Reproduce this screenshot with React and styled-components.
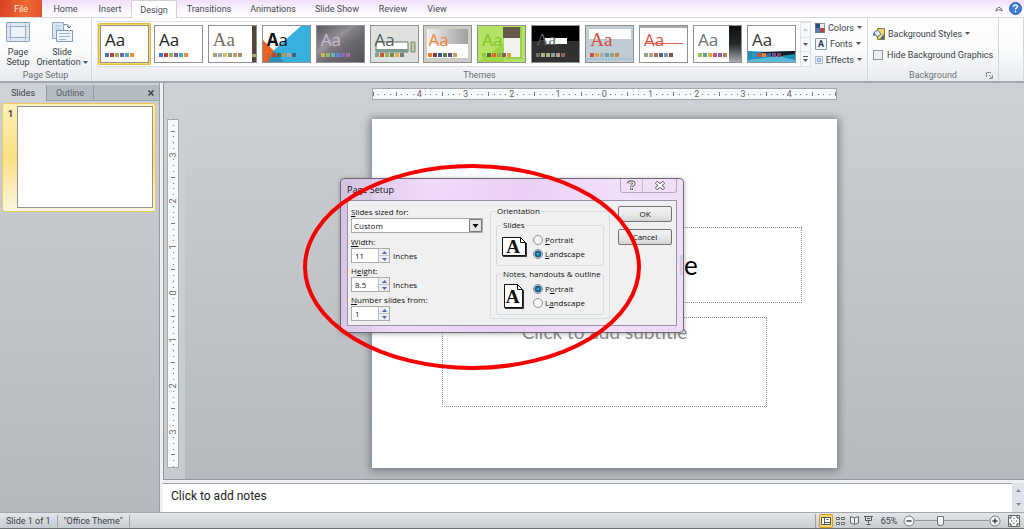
import { useState } from "react";
import styled, { createGlobalStyle } from "styled-components";

const GlobalStyle = createGlobalStyle`
  * {
    box-sizing: border-box;
  }
  body {
    margin: 0;
    font-family: Roboto, "Open Sans", sans-serif;
    font-size: 9px;
    line-height: 12px;
    color: #3b3f45;
  }
  button, input, select, textarea {
    font: inherit;
    color: inherit;
    margin: 0;
  }
  button {
    padding: 0;
    border: 0;
    background: none;
  }
`;

const Window = styled.div`
  position: relative;
  display: flex;
  flex-direction: column;
  height: 100vh;
  overflow: hidden;
  background: #c5c9ce;
`;

/* ---------- ribbon ---------- */

const TabBar = styled.nav`
  display: flex;
  align-items: stretch;
  height: 18px;
  flex: none;
  background: linear-gradient(#f1dffa, #fbf6fe 60%, #ffffff);
  border-bottom: 1px solid #d5d9de;
`;

const FileTab = styled.button`
  width: 42px;
  color: #ffe9dd;
  background: linear-gradient(100deg, #d7401f, #ee6a35 60%, #e2502a);
`;

const Tab = styled.button`
  width: ${(props) => props.$width}px;
  color: #474b52;
  ${(props) =>
    props.$active &&
    `
    margin-bottom: -1px;
    background: #fff;
    border: 1px solid #cdd1d6;
    border-bottom: 0;
    border-radius: 2px 2px 0 0;
  `}
`;

const TabTools = styled.div`
  display: flex;
  align-items: center;
  gap: 6px;
  margin-left: auto;
  padding-right: 2px;
`;

const IconButton = styled.button`
  display: flex;
  align-items: center;
  justify-content: center;
`;

const Ribbon = styled.div`
  display: flex;
  height: 65px;
  flex: none;
  background: linear-gradient(#ffffff, #fafbfc 50%, #e7eaee);
  border-bottom: 2px solid #a3a9b0;
`;

const Group = styled.section`
  display: flex;
  flex-direction: column;
  flex: ${(props) => (props.$grow ? "1" : "none")};
  width: ${(props) => (props.$width ? `${props.$width}px` : "auto")};
  min-width: 0;
  padding: 3px 5px 0;
  border-right: 1px solid #d3d7dc;
`;

const GroupLabel = styled.div`
  display: flex;
  align-items: center;
  justify-content: center;
  margin-top: auto;
  height: 12px;
  color: #6d7279;
`;

const Launcher = styled(IconButton)`
  position: absolute;
  right: 0;
`;

const LauncherLabel = styled(GroupLabel)`
  position: relative;
`;

const BigButtons = styled.div`
  display: flex;
  margin: 0 -5px;
`;

const BigButton = styled.button`
  display: flex;
  flex-direction: column;
  align-items: center;
  width: ${(props) => props.$width}px;
  line-height: 10px;
  gap: 4px;
  white-space: nowrap;
`;

const Arrow = styled.svg`
  display: block;
  flex: none;
  margin: auto;
`;

const WithArrow = styled.span`
  display: flex;
  align-items: center;
  gap: 2px;
`;

const ThemeRow = styled.div`
  display: flex;
  gap: 4px;
`;

const Gallery = styled.div`
  display: flex;
  flex: 1;
  height: 46px;
  min-width: 0;
  background: #fff;
  border: 1px solid #dde1e5;
`;

const ThemeList = styled.div`
  display: flex;
  flex: 1;
  align-items: center;
  justify-content: space-between;
  padding-right: 2px;
  min-width: 0;
  overflow: hidden;
`;

const ThemeFrame = styled.button`
  padding: 2px;
  border-radius: 2px;
  background: ${(props) => (props.$selected ? "#fbd75e" : "transparent")};
  box-shadow: ${(props) => (props.$selected ? "inset 0 0 0 1px #e6b93c" : "none")};
`;

const ThemeCard = styled.span`
  position: relative;
  display: flex;
  flex-direction: column;
  width: 49px;
  height: 38px;
  padding: 4px 4px 0;
  border: 1px solid #8d9196;
  background: #fff;
  overflow: hidden;
`;

const ThemeArt = styled.svg`
  position: absolute;
  inset: 0;
`;

const ThemeLetters = styled.span`
  position: relative;
  font-family: ${(props) => props.$font};
  font-size: ${(props) => props.$size || 17}px;
  line-height: 19px;
  text-align: left;
  color: ${(props) => props.$color};
`;

const Swatches = styled.span`
  position: relative;
  display: flex;
  gap: 1px;
  margin-top: 4px;
`;

const Swatch = styled.span`
  width: 4px;
  height: 4px;
  background: ${(props) => props.$color};
`;

const GalleryArrows = styled.div`
  display: flex;
  flex-direction: column;
  width: 10px;
  border-left: 1px solid #dde1e5;

  button {
    flex: 1;
    background: #f7f8fa;
    border-top: 1px solid #e2e5e9;
  }
`;

const OptionColumn = styled.div`
  display: flex;
  flex-direction: column;
  width: 47px;
  gap: 3px;
`;

const OptionButton = styled.button`
  display: flex;
  align-items: center;
  gap: 3px;
  height: 13px;
  white-space: nowrap;

  ${Arrow} {
    margin: 0;
  }
`;

const BackgroundOptions = styled.div`
  display: flex;
  flex-direction: column;
  gap: 9px;
  padding-top: 6px;
`;

const CheckLabel = styled.label`
  display: flex;
  align-items: center;
  gap: 4px;
  white-space: nowrap;
`;

const Checkbox = styled.input`
  appearance: none;
  width: 10px;
  height: 10px;
  flex: none;
  border: 1px solid #8f949a;
  background: #eceef0;
`;

/* ---------- work area ---------- */

const Workspace = styled.div`
  display: flex;
  flex: 1;
  min-height: 0;
`;

const SlidePane = styled.aside`
  display: flex;
  flex-direction: column;
  width: 160px;
  flex: none;
  padding-top: 2px;
  background: linear-gradient(#cdd1d6, #b5b9bd);
  border-right: 1px solid #979da4;
`;

const PaneTabs = styled.div`
  display: flex;
  height: 16px;
  background: #b5bbc3;
  border-bottom: 1px solid #9da3ab;
`;

const PaneTab = styled.button`
  width: 47px;
  color: ${(props) => (props.$active ? "#3b3f45" : "#5c6168")};
  background: ${(props) => (props.$active ? "#cfd3d8" : "transparent")};
  margin-bottom: ${(props) => (props.$active ? "-1px" : "0")};
  border-right: 1px solid #9199a2;
`;

const PaneClose = styled(IconButton)`
  margin-left: auto;
  width: 16px;
`;

const SlideItem = styled.button`
  display: flex;
  gap: 4px;
  margin: 2px 3px 0 2px;
  padding: 2px 2px 3px 5px;
  border: 1px solid #ecc95a;
  border-radius: 3px;
  background: linear-gradient(#fdf0b8, #fcdf82 50%, #fbf6e2);
  font-weight: bold;

  span {
    padding-top: 2px;
  }
`;

const SlideThumb = styled.div`
  flex: 1;
  aspect-ratio: 4 / 3;
  background: #fff;
  border: 1px solid #8f949b;
`;

const Editor = styled.main`
  display: flex;
  flex-direction: column;
  flex: 1;
  min-width: 0;
  border-left: 3px solid #eef0f3;
`;

const Stage = styled.div`
  display: grid;
  grid-template-columns: 21px 1fr;
  grid-template-rows: 12px 1fr;
  row-gap: 19px;
  flex: 1;
  min-height: 0;
  padding-top: 5px;
  background:
    linear-gradient(#cdd1d5, #c6cbd0) left / 21px 100% no-repeat,
    linear-gradient(#cdd1d5, #b6babe);
  border-left: 1px solid #8f959c;
  border-bottom: 1px solid #8f959c;
`;

const Ruler = styled.div`
  display: flex;
  flex-direction: ${(props) => (props.$vertical ? "column" : "row")};
  justify-content: space-between;
  align-items: center;
  background: #f8f9fa;
  border: 1px solid #a4a9af;
  color: #666;
`;

const TopRuler = styled(Ruler)`
  grid-column: 2;
  justify-self: center;
  width: 465px;
  max-width: 96%;
`;

const SideRuler = styled(Ruler)`
  width: 12px;
  height: 349px;
  margin-left: 3px;
`;

const Tick = styled.span`
  display: flex;
  align-items: center;
  justify-content: center;
  width: 0;
  height: 0;
  transform: ${(props) => (props.$vertical ? "rotate(-90deg)" : "none")};

  i {
    flex: none;
    width: 1px;
    height: ${(props) => (props.$long ? 4 : 1)}px;
    background: #777;
  }
`;

const Slide = styled.article`
  position: relative;
  grid-column: 2;
  justify-self: center;
  align-self: start;
  display: flex;
  flex-direction: column;
  align-items: center;
  width: 465px;
  max-width: 96%;
  aspect-ratio: 4 / 3;
  padding-top: 108px;
  gap: 14px;
  background: #fff;
  box-shadow: 0 1px 8px 2px #7c8187;
  font-family: Lato, sans-serif;
`;

const Placeholder = styled.div`
  display: flex;
  justify-content: center;
  width: ${(props) => props.$width};
  height: ${(props) => props.$height}px;
  border: 1px dotted #8a8a8a;
`;

const SlideTitle = styled(Placeholder)`
  align-items: center;
  font-size: 26px;
  line-height: 32px;
  color: #000;
`;

const SlideSubtitle = styled(Placeholder)`
  padding-top: 2px;
  font-size: 19px;
  line-height: 24px;
  color: #8b8b8b;
`;

const Notes = styled.div`
  display: flex;
  height: 32px;
  flex: none;
  border-top: 3px solid #eef0f3;
  background: #fff;
  box-shadow: inset 0 1px #9ba1a8;
`;

const NotesText = styled.textarea`
  flex: 1;
  resize: none;
  border: 0;
  outline: 0;
  padding: 6px 8px 0;
  background: none;
  font-size: 12px;
  line-height: 14px;
  color: #222;
  overflow: hidden;
`;

const NotesScroll = styled.div`
  display: flex;
  flex-direction: column;
  width: 12px;
  background: #dfe3e7;

  button {
    flex: 1;
  }
`;

/* ---------- status bar ---------- */

const StatusBar = styled.footer`
  display: flex;
  align-items: center;
  height: 17px;
  flex: none;
  background: linear-gradient(#e3e6e9, #c6cbd0);
  border-top: 1px solid #a0a6ac;
  border-bottom: 1px solid #6d7277;
`;

const StatusItem = styled.span`
  padding: 0 6px;
  border-right: 1px solid #9da2a8;
`;

const StatusTools = styled.div`
  display: flex;
  align-items: center;
  margin-left: auto;
  padding: 0 3px;
  border-left: 1px solid #9da2a8;
`;

const ViewButton = styled(IconButton)`
  width: 14px;
  height: 14px;
  border-radius: 2px;
  border: 1px solid ${(props) => (props.$active ? "#d49b25" : "transparent")};
  background: ${(props) => (props.$active ? "#fcd975" : "transparent")};
`;

const FitButton = styled(ViewButton)`
  margin-left: 6px;
`;

const ZoomValue = styled.button`
  width: 28px;
`;

const ZoomSlider = styled.input`
  appearance: none;
  width: 74px;
  height: 12px;
  background: linear-gradient(#8f959b, #8f959b) center / 100% 1px no-repeat;

  &::-webkit-slider-thumb {
    appearance: none;
    width: 7px;
    height: 10px;
    border: 1px solid #6f757b;
    border-radius: 1px 1px 4px 4px;
    background: #f5f6f7;
  }
`;

/* ---------- dialog ---------- */

const DialogLayer = styled.div`
  position: absolute;
  top: 178px;
  left: 50%;
  width: 344px;
  margin-left: -172px;
  font-family: "Open Sans", sans-serif;
  font-size: 8px;
`;

const Dialog = styled.section`
  padding: 0 6px 6px;
  border: 1px solid #6d6674;
  border-radius: 4px;
  background: linear-gradient(100deg, #d3c2e2e8, #f0d9f9f2 25%, #e8cdf4f2 50%, #f2def9f2 75%, #eedcf6e8);
  box-shadow: 0 1px 5px #5557;
  color: #111;
`;

const DialogBar = styled.header`
  display: flex;
  align-items: center;
  height: 21px;
`;

const DialogTitle = styled.h2`
  margin: 0;
  font: inherit;
  font-size: 9px;
`;

const WindowButtons = styled.div`
  display: flex;
  align-self: flex-start;
  margin-left: auto;
  border: 1px solid #b9a6c5;
  border-top: 0;
  border-radius: 0 0 3px 3px;

  button {
    width: 21px;
    height: 13px;
  }
  button + button {
    width: 34px;
    border-left: 1px solid #c9b7d4;
  }
`;

const DialogBody = styled.form`
  display: flex;
  height: 126px;
  padding: 4px 4px 4px 3px;
  border: 1px solid #9b90a5;
  background: #f0f0f0;
`;

const Fields = styled.div`
  display: flex;
  flex-direction: column;
  width: 132px;
`;

const FieldLabel = styled.label`
  height: 13px;
  line-height: 13px;

  u {
    text-underline-offset: 1px;
  }
`;

const SelectWrap = styled.div`
  position: relative;
  margin-bottom: 2px;
`;

const Select = styled.select`
  appearance: none;
  display: block;
  width: 100%;
  height: 15px;
  padding: 0 16px 0 2px;
  border: 1px solid #aaa;
  border-radius: 0;
  background: #fff;
`;

const SelectArrow = styled.svg`
  position: absolute;
  top: 1px;
  right: 1px;
  pointer-events: none;
`;

const SpinRow = styled.div`
  display: flex;
  align-items: center;
  gap: 3px;
  height: 15px;
  margin-bottom: 1px;
`;

const Spinner = styled.span`
  display: flex;
  width: 39px;
  height: 15px;
  border: 1px solid #aaa;
  background: #fff;
`;

const SpinInput = styled.input`
  width: 26px;
  padding: 0 3px;
  border: 0;
  outline: 0;
  background: none;
`;

const SpinArrows = styled.span`
  display: flex;
  flex-direction: column;
  flex: 1;
  border-left: 1px solid #bbb;
  background: #eceef4;

  button {
    flex: 1;
  }
  button + button {
    border-top: 1px solid #c5c5c5;
  }
`;

const Fieldset = styled.fieldset`
  min-width: 0;
  margin: 0;
  padding: 0 5px 5px;
  border: 1px solid #d3dde2;
  border-radius: 2px;

  legend {
    padding: 0 1px;
    white-space: nowrap;
  }
`;

const OrientationBox = styled(Fieldset)`
  width: 120px;
  margin: 0 8px 2px 7px;
`;

const ChoiceBox = styled(Fieldset)`
  height: 47px;
  margin-top: 2px;
  padding: 0 5px;
`;

const ChoiceRow = styled.div`
  display: flex;
  align-items: center;
  gap: 6px;
  margin-top: 3px;
`;

const Choices = styled.div`
  display: flex;
  flex-direction: column;
  gap: 2px;
`;

const RadioLabel = styled.label`
  display: flex;
  align-items: center;
  gap: 2px;
`;

const Radio = styled.input`
  appearance: none;
  width: 10px;
  height: 10px;
  border: 1px solid #8e9396;
  border-radius: 50%;
  background: #f6f6f6;

  &:checked {
    background: radial-gradient(circle, #55c4ee 0, #17618c 2px, #17618c 3px, #dfe5e8 4px);
  }
`;

const PushButtons = styled.div`
  display: flex;
  flex-direction: column;
  gap: 7px;
  flex: 1;
  padding-top: 1px;
`;

const PushButton = styled.button`
  height: 16px;
  border: 1px solid #737373;
  border-radius: 2px;
  background: linear-gradient(#f3f3f3, #e9e9e9 50%, #d4d4d4);
`;

const Highlight = styled.svg`
  position: absolute;
  top: -15px;
  left: -38px;
  pointer-events: none;
`;

const tabs = [
  ["Home", 47],
  ["Insert", 42],
  ["Design", 46],
  ["Transitions", 64],
  ["Animations", 64],
  ["Slide Show", 64],
  ["Review", 48],
  ["View", 40],
];

const sans = '"Open Sans", sans-serif';
const serif = '"Liberation Serif", serif';
const office = ["#4475bd", "#c53b3b", "#91b94d", "#7d5ea5", "#3fadcb", "#f08c35"];

const themes = [
  { name: "Office Theme", font: sans, color: "#222", swatches: office },
  { name: "Office", font: sans, color: "#222", swatches: office },
  {
    name: "Adjacency",
    font: serif,
    size: 19,
    color: "#77705f",
    swatches: ["#a7a06c", "#90b0b5", "#d5c36d", "#8a9c72", "#c29c62", "#a49072"],
    art: (
      <>
        <path d="M43 0h4v36h-4z" fill="#51483a" />
        <path d="M43 28h4v3h-4z" fill="#b3a66d" />
      </>
    ),
  },
  {
    name: "Angles",
    font: sans,
    color: "#111",
    bold: true,
    swatches: ["#d95f27", "#b84b25", "#4f6b3c", "#a99c56", "#b6a494", "#3d648c"],
    art: (
      <>
        <path d="M47 0H38L11 24l8 12h28z" fill="#38b0de" />
        <path d="M0 14l13 13-6 9H0z" fill="#ea6224" />
        <path d="M11 24l10 12H5z" fill="#2b8fb5" />
      </>
    ),
  },
  {
    name: "Apex",
    font: sans,
    color: "#c9bfd0",
    swatches: ["#cdb45f", "#9bb65c", "#6bb1c9", "#6685cc", "#8b6bc9", "#a472a9"],
    art: (
      <>
        <linearGradient id="apex" x1="0" y1="0" x2="1" y2="1">
          <stop offset="0" stopColor="#5c5a60" />
          <stop offset=".35" stopColor="#8d8a91" />
          <stop offset=".6" stopColor="#6c6a70" />
          <stop offset="1" stopColor="#535157" />
        </linearGradient>
        <path d="M0 0h47v36H0z" fill="url(#apex)" />
        <path d="M0 24L34 0h5L0 30z" fill="#aaa7ae" opacity=".25" />
      </>
    ),
  },
  {
    name: "Apothecary",
    font: sans,
    color: "#555c5e",
    swatches: ["#7fa291", "#c9533c", "#a4ad4f", "#678e57", "#e0b342", "#737c7c"],
    art: (
      <>
        <path d="M0 0h47v36H0z" fill="#dfe1df" />
        <path d="M5 16h32v10H5z" fill="#fff" stroke="#65756f" />
        <path d="M5 23h32v3H5z" fill="#7f9b90" />
        <path d="M40 16h4v10h-4z" fill="#c3c79b" stroke="#7a8677" />
      </>
    ),
  },
  {
    name: "Aspect",
    font: sans,
    color: "#f08333",
    swatches: ["#f08030", "#9d2c2c", "#2c5d8a", "#4f8540", "#5b4b86", "#c1a061"],
    art: (
      <>
        <linearGradient id="aspect">
          <stop offset="0" stopColor="#f2f1f0" />
          <stop offset="1" stopColor="#9f9e9c" />
        </linearGradient>
        <path d="M0 0h47v36H0z" fill="#cfcdc6" />
        <path d="M3 3h41v15H3z" fill="url(#aspect)" />
        <path d="M3 18h41v14H3z" fill="#fff" />
      </>
    ),
  },
  {
    name: "Austin",
    font: sans,
    color: "#7fc421",
    swatches: ["#93c83a", "#576542", "#e86b25", "#a1a54d", "#75665a", "#e39e32"],
    art: (
      <>
        <path d="M0 0h47v36H0z" fill="#b3e265" />
        <path d="M0 36L26 17v19z" fill="#8fce32" opacity=".6" />
        <path d="M25 1h17v11H25z" fill="#66594b" />
        <path d="M26 12h16v19H26z" fill="#f2f2ec" />
        <path d="M42 1h1v31H28" fill="none" stroke="#8cba3b" />
      </>
    ),
  },
  {
    name: "Black Tie",
    font: serif,
    color: "#666",
    swatches: ["#6f6f74", "#a7b789", "#b9ac76", "#7ba2b0", "#b99d83", "#8a6461"],
    art: (
      <>
        <path d="M0 0h47v36H0z" fill="#303030" />
        <path d="M0 0h47v15H0z" fill="#000" />
        <path d="M13 12h22v6H13z" fill="#fff" />
      </>
    ),
  },
  {
    name: "Civic",
    font: serif,
    size: 19,
    color: "#cf4f3e",
    swatches: ["#cf4f3e", "#dc9f41", "#a3b0b5", "#7398ae", "#80ae76", "#cf8647"],
    art: (
      <>
        <path d="M0 0h47v36H0z" fill="#c0cdd4" />
        <path d="M3 3h42v10H3z" fill="#fff" />
        <path d="M1 33h45" stroke="#7db0c8" strokeDasharray="2 1" />
      </>
    ),
  },
  {
    name: "Clarity",
    font: sans,
    color: "#e0503a",
    swatches: ["#8fa0a0", "#b79b77", "#a4755c", "#50657e", "#7b9bb6", "#84503f"],
    art: (
      <>
        <path d="M0 0h47v2H0z" fill="#aaa" />
        <path d="M5 17.500h38" stroke="#e0654f" />
      </>
    ),
  },
  {
    name: "Composite",
    font: sans,
    color: "#6a7178",
    swatches: ["#99c644", "#51a69b", "#e5a934", "#c7517a", "#8b63a5", "#b58249"],
    art: (
      <>
        <linearGradient id="composite" x1="0" y1="0" x2="0" y2="1">
          <stop offset="0" stopColor="#0d0e10" />
          <stop offset=".5" stopColor="#25282b" />
          <stop offset="1" stopColor="#a6acb3" />
        </linearGradient>
        <path d="M35 0h12v36H35z" fill="url(#composite)" />
      </>
    ),
  },
  {
    name: "Concourse",
    font: sans,
    color: "#333",
    swatches: ["#2d9cc0", "#d84c34", "#e47e31", "#3d6aa0", "#70509a", "#9a3b47"],
    art: (
      <>
        <path d="M0 25l22 1 25-1v11H0z" fill="#1990ba" />
        <path d="M12 26l35-1v3l-22 3z" fill="#111c24" />
        <path d="M0 34l30-4 17 4v2H0z" fill="#58bcd8" />
      </>
    ),
  },
];

const Caret = ({ up, color = "#555" }) => (
  <Arrow width="5" height="3" viewBox="0 0 5 3">
    <path d={up ? "M0 3h5L2.500 0z" : "M0 0h5L2.500 3z"} fill={color} />
  </Arrow>
);

const RulerTicks = ({ from, to, vertical }) => {
  const ticks = [];
  for (let i = from; i <= to; i++) {
    const number = i % 8 === 0 && Math.abs(i) < 40;
    ticks.push(
      <Tick key={i} $vertical={vertical} $long={i % 4 === 0}>
        {number ? Math.abs(i / 8) : <i />}
      </Tick>
    );
  }
  return ticks;
};

const ThemeThumb = ({ theme, selected, onSelect }) => (
  <ThemeFrame $selected={selected} onClick={onSelect} aria-label={theme.name}>
    <ThemeCard>
      <ThemeArt width="47" height="36" viewBox="0 0 47 36">
        {theme.art}
      </ThemeArt>
      <ThemeLetters $font={theme.font} $size={theme.size} $color={theme.color}>
        {theme.bold ? <b>A</b> : "A"}a
      </ThemeLetters>
      <Swatches>
        {theme.swatches.map((color) => (
          <Swatch key={color} $color={color} />
        ))}
      </Swatches>
    </ThemeCard>
  </ThemeFrame>
);

const SpinField = ({ id, label, value, unit }) => (
  <>
    <FieldLabel htmlFor={id}>{label}</FieldLabel>
    <SpinRow>
      <Spinner>
        <SpinInput id={id} defaultValue={value} />
        <SpinArrows>
          <button type="button" aria-label="Increase">
            <Caret up color="#5269a5" />
          </button>
          <button type="button" aria-label="Decrease">
            <Caret color="#5269a5" />
          </button>
        </SpinArrows>
      </Spinner>
      {unit}
    </SpinRow>
  </>
);

const PageGlyph = ({ portrait }) => {
  const w = portrait ? 19 : 24;
  const h = portrait ? 24 : 19;
  return (
    <svg width="25" height={h + 1} viewBox={`0 0 25 ${h + 1}`}>
      <g transform={portrait ? "translate(2 0)" : undefined}>
        <path d={`M.5.500h${w - 6}l5 5v${h - 6}H.5z`} fill="#fff" stroke="#111" />
        <path d={`M${w - 5.5}.500v5h5`} fill="none" stroke="#111" />
        <path d={`M1 ${h + 0.5}h${w - 0.5}V6`} fill="none" stroke="#333" />
        <text
          x={w / 2 - 1}
          y={portrait ? 19 : 16}
          textAnchor="middle"
          fontFamily="Liberation Serif, serif"
          fontWeight="bold"
          fontSize="19"
          fill="#111"
        >
          A
        </text>
      </g>
    </svg>
  );
};

const OrientationChoice = ({ title, name, portrait, labels }) => (
  <ChoiceBox>
    <legend>{title}</legend>
    <ChoiceRow>
      <PageGlyph portrait={portrait} />
      <Choices>
        <RadioLabel>
          <Radio type="radio" name={name} defaultChecked={portrait} />
          <span>{labels[0]}</span>
        </RadioLabel>
        <RadioLabel>
          <Radio type="radio" name={name} defaultChecked={!portrait} />
          <span>{labels[1]}</span>
        </RadioLabel>
      </Choices>
    </ChoiceRow>
  </ChoiceBox>
);

const PageSetupDialog = () => (
  <DialogLayer>
    <Dialog role="dialog" aria-label="Page Setup">
      <DialogBar>
        <DialogTitle>Page Setup</DialogTitle>
        <WindowButtons>
          <IconButton aria-label="Help">
            <svg width="9" height="11" viewBox="0 0 9 11" fill="none">
              <path d="M1 3.500C1.500 1 7 1 7 3.500 7 5 4.500 5 4.500 7M4.500 8v2" stroke="#666" strokeWidth="3" />
              <path d="M1.500 3.500C2 1.500 7 1.500 7 3.500 7 5 4.500 5 4.500 6.500M4.500 8.500v1" stroke="#fff" strokeWidth="1.200" />
            </svg>
          </IconButton>
          <IconButton aria-label="Close">
            <svg width="10" height="9" viewBox="0 0 10 9">
              <path d="M1 1l8 7M9 1L1 8" stroke="#666" strokeWidth="3.600" />
              <path d="M1.500 1.500l7 6M8.500 1.500l-7 6" stroke="#fff" strokeWidth="1.800" />
            </svg>
          </IconButton>
        </WindowButtons>
      </DialogBar>
      <DialogBody>
        <Fields>
          <FieldLabel htmlFor="sized">
            <u>S</u>lides sized for:
          </FieldLabel>
          <SelectWrap>
            <Select id="sized">
              <option>Custom</option>
            </Select>
            <SelectArrow width="13" height="13" viewBox="0 0 13 13">
              <path d="M.5.500h12v12H.5z" fill="#e6e6e6" stroke="#777" />
              <path d="M3.500 5h6l-3 4z" fill="#111" />
            </SelectArrow>
          </SelectWrap>
          <SpinField id="width" label={<><u>W</u>idth:</>} value="11" unit="Inches" />
          <SpinField id="height" label={<>H<u>e</u>ight:</>} value="8.5" unit="Inches" />
          <SpinField id="from" label={<><u>N</u>umber slides from:</>} value="1" />
        </Fields>
        <OrientationBox>
          <legend>Orientation</legend>
          <OrientationChoice
            title="Slides"
            name="slides"
            labels={[<><u>P</u>ortrait</>, <><u>L</u>andscape</>]}
          />
          <OrientationChoice
            title="Notes, handouts & outline"
            name="notes"
            portrait
            labels={[<>P<u>o</u>rtrait</>, <>L<u>a</u>ndscape</>]}
          />
        </OrientationBox>
        <PushButtons>
          <PushButton type="button">OK</PushButton>
          <PushButton type="button">Cancel</PushButton>
        </PushButtons>
      </DialogBody>
    </Dialog>
    <Highlight width="340" height="208" viewBox="0 0 340 208">
      <ellipse cx="170" cy="104" rx="167" ry="101" fill="none" stroke="#f70000" strokeWidth="4" />
    </Highlight>
  </DialogLayer>
);

const App = () => {
  const [activeTab, setActiveTab] = useState("Design");
  const [theme, setTheme] = useState(0);

  return (
    <Window>
      <GlobalStyle />
      <TabBar>
        <FileTab>File</FileTab>
        {tabs.map(([name, width]) => (
          <Tab
            key={name}
            $width={width}
            $active={name === activeTab}
            onClick={() => setActiveTab(name)}
          >
            {name}
          </Tab>
        ))}
        <TabTools>
          <IconButton aria-label="Minimize the Ribbon">
            <svg width="8" height="6" viewBox="0 0 8 6">
              <path d="M1 3.500L4 1l3 2.500V5L4 3.500 1 5z" fill="#fff" stroke="#666" />
            </svg>
          </IconButton>
          <IconButton aria-label="Help">
            <svg width="13" height="13" viewBox="0 0 13 13">
              <circle cx="6.500" cy="6.500" r="6" fill="#3d7fd0" stroke="#2a62aa" />
              <path
                d="M4.500 5c0-3 4-2.500 4-.5 0 1.500-2 1.500-2 3M6.500 8.800v1.400"
                fill="none"
                stroke="#fff"
                strokeWidth="1.400"
              />
            </svg>
          </IconButton>
        </TabTools>
      </TabBar>

      <Ribbon>
        <Group $width={92}>
          <BigButtons>
            <BigButton $width={36}>
              <svg width="24" height="22" viewBox="0 0 24 22">
                <path d="M.5 1.500h23v19H.5z" fill="#dfe9f3" stroke="#8ea3ba" />
                <path d="M4.500 5.500h15v11h-15z" fill="#fff" />
                <path d="M4.500 2v18M19.500 2v18M1 5.500h22M1 16.500h22" stroke="#b3c3d4" />
                <path d="M4.500 5.500h15v11h-15z" fill="#eef3f9" stroke="#93a9c0" />
              </svg>
              <span>
                Page
                <br />
                Setup
              </span>
            </BigButton>
            <BigButton $width={52}>
              <svg width="24" height="22" viewBox="0 0 24 22">
                <path d="M2.500 1.500h11v16h-11z" fill="#dce8f4" stroke="#8ba5c2" />
                <path d="M5 5h6M5 8h6" stroke="#a9bfd6" />
                <path d="M14 4c3-1 5 0 5 3M17 5l2 2 2-2" fill="none" stroke="#5a6f88" />
                <path d="M6.500 9.500h16v11h-16z" fill="#eef4fa" stroke="#7f9cbd" />
                <path d="M9 12.500h11M9 15.500h11M9 18.500h7" stroke="#9cb4ce" />
              </svg>
              <span>
                Slide
                <WithArrow>
                  Orientation <Caret />
                </WithArrow>
              </span>
            </BigButton>
          </BigButtons>
          <GroupLabel>Page Setup</GroupLabel>
        </Group>

        <Group $grow>
          <ThemeRow>
            <Gallery>
              <ThemeList>
                {themes.map((item, index) => (
                  <ThemeThumb
                    key={item.name}
                    theme={item}
                    selected={index === theme}
                    onSelect={() => setTheme(index)}
                  />
                ))}
              </ThemeList>
              <GalleryArrows>
                <button aria-label="Previous themes">
                  <Caret up color="#c3c7cc" />
                </button>
                <button aria-label="Next themes">
                  <Caret />
                </button>
                <button aria-label="More themes">
                  <Arrow width="5" height="6" viewBox="0 0 5 6">
                    <path d="M0 .5h5" stroke="#555" />
                    <path d="M0 3h5L2.500 6z" fill="#555" />
                  </Arrow>
                </button>
              </GalleryArrows>
            </Gallery>
            <OptionColumn>
              <OptionButton>
                <svg width="12" height="12" viewBox="0 0 12 12">
                  <path d="M0 0h6v6H0z" fill="#24517f" />
                  <path d="M6 0h6v6H6z" fill="#ecece4" />
                  <path d="M0 6h6v6H0z" fill="#4f7fc0" />
                  <path d="M6 6h6v6H6z" fill="#c43d3d" />
                  <path d="M.5.500h11v11H.5z" fill="none" stroke="#6c7f96" />
                </svg>
                Colors <Caret />
              </OptionButton>
              <OptionButton>
                <svg width="12" height="12" viewBox="0 0 12 12">
                  <path d="M.5.500h11v11H.5z" fill="#f2f6fa" stroke="#8497ad" />
                  <text x="6" y="9" textAnchor="middle" fontSize="9" fontWeight="bold" fill="#223a5c">
                    A
                  </text>
                </svg>
                Fonts <Caret />
              </OptionButton>
              <OptionButton>
                <svg width="12" height="12" viewBox="0 0 12 12">
                  <path d="M.5.500h11v11H.5z" fill="#f2f6fa" stroke="#8497ad" />
                  <circle cx="6" cy="6" r="3" fill="#b9d6f5" stroke="#4f86c8" />
                </svg>
                Effects <Caret />
              </OptionButton>
            </OptionColumn>
          </ThemeRow>
          <GroupLabel>Themes</GroupLabel>
        </Group>

        <Group $width={131}>
          <BackgroundOptions>
            <OptionButton>
              <svg width="12" height="12" viewBox="0 0 12 12">
                <path d="M4.500.500h7v11h-7z" fill="#f5d36b" stroke="#8b7a3e" />
                <path d="M7 11l4-5v5z" fill="#3d6ca8" />
                <path d="M1 4.500L4.500 2 8 6 4 9z" fill="#e5edf5" stroke="#56708f" />
                <path d="M1 5v3" stroke="#3d6ca8" strokeWidth="1.500" />
              </svg>
              Background Styles <Caret />
            </OptionButton>
            <CheckLabel>
              <Checkbox type="checkbox" />
              Hide Background Graphics
            </CheckLabel>
          </BackgroundOptions>
          <LauncherLabel>
            Background
            <Launcher aria-label="Format Background">
              <svg width="7" height="7" viewBox="0 0 7 7">
                <path d="M.5 5V.5H5M3 3l3 3M6.500 3v3.500H3" fill="none" stroke="#8a8f96" />
              </svg>
            </Launcher>
          </LauncherLabel>
        </Group>
        <Group $width={25} />
      </Ribbon>

      <Workspace>
        <SlidePane>
          <PaneTabs>
            <PaneTab $active>Slides</PaneTab>
            <PaneTab>Outline</PaneTab>
            <PaneClose aria-label="Close pane">
              <svg width="6" height="6" viewBox="0 0 6 6">
                <path d="M.5.500l5 5M5.500.500l-5 5" stroke="#444" strokeWidth="1.500" />
              </svg>
            </PaneClose>
          </PaneTabs>
          <SlideItem>
            <span>1</span>
            <SlideThumb />
          </SlideItem>
        </SlidePane>

        <Editor>
          <Stage>
            <TopRuler>
              <RulerTicks from={-40} to={40} />
            </TopRuler>
            <SideRuler $vertical>
              <RulerTicks from={-30} to={30} vertical />
            </SideRuler>
            <Slide>
              <SlideTitle $width="85%" $height={76}>
                Click to add title
              </SlideTitle>
              <SlideSubtitle $width="70%" $height={90}>
                Click to add subtitle
              </SlideSubtitle>
            </Slide>
          </Stage>
          <Notes>
            <NotesText aria-label="Notes" defaultValue="Click to add notes" />
            <NotesScroll>
              <button aria-label="Scroll up">
                <Caret up color="#7b8891" />
              </button>
              <button aria-label="Scroll down">
                <Caret color="#7b8891" />
              </button>
            </NotesScroll>
          </Notes>
        </Editor>
      </Workspace>

      <StatusBar>
        <StatusItem>Slide 1 of 1</StatusItem>
        <StatusItem>"Office Theme"</StatusItem>
        <StatusTools>
          <ViewButton $active aria-label="Normal">
            <svg width="10" height="8" viewBox="0 0 10 8" fill="#fff" stroke="#555">
              <path d="M.5.500h9v7h-9zM3.500.500v7M3.500 5.500h6M5.500 2.500h2" />
            </svg>
          </ViewButton>
          <ViewButton aria-label="Slide Sorter">
            <svg width="9" height="8" viewBox="0 0 9 8" fill="#eee" stroke="#666">
              <path d="M.5.500h3v2h-3zM5.500.500h3v2h-3zM.5 5.500h3v2h-3zM5.500 5.500h3v2h-3z" />
            </svg>
          </ViewButton>
          <ViewButton aria-label="Reading View">
            <svg width="9" height="9" viewBox="0 0 9 9" fill="#eee" stroke="#666">
              <path d="M4.500 2L.5.500V7l4 1.500L8.500 7V.500zM4.500 2v6" />
            </svg>
          </ViewButton>
          <ViewButton aria-label="Slide Show">
            <svg width="9" height="9" viewBox="0 0 9 9" fill="none" stroke="#555">
              <path d="M0 .5h9M1.500.500v4h6v-4M4.500 4.500v3M2.500 8.500h4M3 2.500h3" />
            </svg>
          </ViewButton>
          <ZoomValue>65%</ZoomValue>
          <IconButton aria-label="Zoom out">
            <svg width="12" height="12" viewBox="0 0 12 12">
              <circle cx="6" cy="6" r="5" fill="#f3f4f5" stroke="#777c82" />
              <path d="M3.500 6h5" stroke="#444" strokeWidth="1.500" />
            </svg>
          </IconButton>
          <ZoomSlider type="range" aria-label="Zoom" min="0" max="100" defaultValue="33" />
          <IconButton aria-label="Zoom in">
            <svg width="12" height="12" viewBox="0 0 12 12">
              <circle cx="6" cy="6" r="5" fill="#f3f4f5" stroke="#777c82" />
              <path d="M3.500 6h5M6 3.500v5" stroke="#444" strokeWidth="1.500" />
            </svg>
          </IconButton>
          <FitButton aria-label="Fit slide to window">
            <svg width="12" height="12" viewBox="0 0 12 12">
              <path d="M.5.500h11v11H.5z" fill="#f4f5f6" stroke="#666" />
              <path d="M2 4V2h2M8 2h2v2M10 8v2H8M4 10H2V8M6 3v1M6 8v1M3 6h1M8 6h1" fill="none" stroke="#444" />
            </svg>
          </FitButton>
        </StatusTools>
      </StatusBar>

      <PageSetupDialog />
    </Window>
  );
};

export default App;
